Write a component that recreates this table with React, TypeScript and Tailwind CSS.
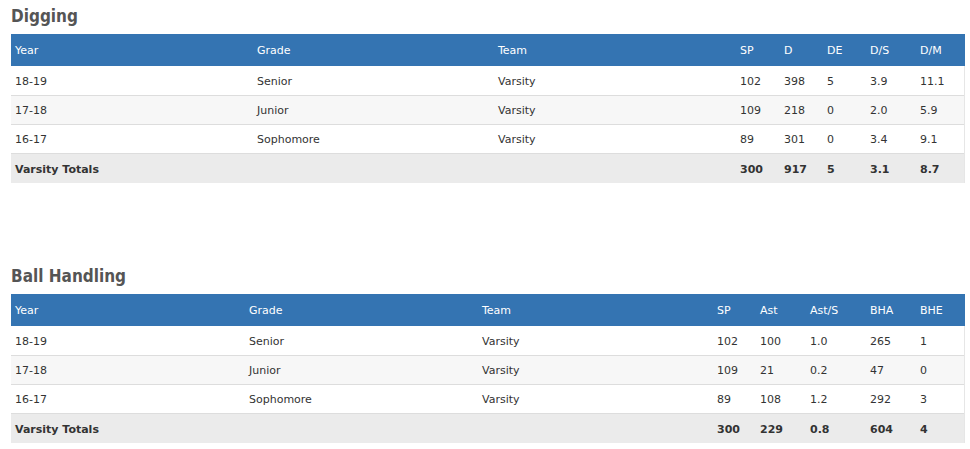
type Row = { year: string; grade: string; team: string; stats: string[] };

type StatTable = {
  title: string;
  cols: string;
  headers: string[];
  rows: Row[];
  totals: string[];
};

const tables: StatTable[] = [
  {
    title: "Digging",
    cols: "grid-cols-[242px_241px_242px_44px_43px_43px_50px_49px]",
    headers: ["Year", "Grade", "Team", "SP", "D", "DE", "D/S", "D/M"],
    rows: [
      { year: "18-19", grade: "Senior", team: "Varsity", stats: ["102", "398", "5", "3.9", "11.1"] },
      { year: "17-18", grade: "Junior", team: "Varsity", stats: ["109", "218", "0", "2.0", "5.9"] },
      { year: "16-17", grade: "Sophomore", team: "Varsity", stats: ["89", "301", "0", "3.4", "9.1"] },
    ],
    totals: ["300", "917", "5", "3.1", "8.7"],
  },
  {
    title: "Ball Handling",
    cols: "grid-cols-[234px_233px_235px_43px_50px_60px_50px_49px]",
    headers: ["Year", "Grade", "Team", "SP", "Ast", "Ast/S", "BHA", "BHE"],
    rows: [
      { year: "18-19", grade: "Senior", team: "Varsity", stats: ["102", "100", "1.0", "265", "1"] },
      { year: "17-18", grade: "Junior", team: "Varsity", stats: ["109", "21", "0.2", "47", "0"] },
      { year: "16-17", grade: "Sophomore", team: "Varsity", stats: ["89", "108", "1.2", "292", "3"] },
    ],
    totals: ["300", "229", "0.8", "604", "4"],
  },
];

function Section({ table, className }: { table: StatTable; className?: string }) {
  return (
    <section className={className}>
      <h2 className="mb-[8px] h-[20px] text-[17px] leading-[20px] font-bold text-[#555] [font-family:'DejaVu_Sans_Condensed','DejaVu_Sans',sans-serif]">
        {table.title}
      </h2>
      <div className="w-[954px] text-[11px] text-[#333]">
        <div className={`grid h-[32px] items-center bg-[#3474b2] pt-[3px] text-white ${table.cols}`}>
          {table.headers.map((h) => (
            <div key={h} className="pl-[4px]">
              {h}
            </div>
          ))}
        </div>
        <div className="border-r border-[#e6e6e6]">
          {table.rows.map((row, i) => (
            <div
              key={row.year}
              className={`grid h-[29px] items-center pt-[3px] ${table.cols} ${
                i > 0 ? "border-t border-[#dddddd]" : ""
              } ${i % 2 === 1 ? "bg-[#f7f7f7]" : "bg-white"}`}
            >
              <div className="pl-[4px]">{row.year}</div>
              <div className="pl-[4px]">{row.grade}</div>
              <div className="pl-[4px]">{row.team}</div>
              {row.stats.map((s, j) => (
                <div key={j} className="pl-[4px]">
                  {s}
                </div>
              ))}
            </div>
          ))}
          <div className={`grid h-[30px] items-center border-t border-[#dddddd] bg-[#ebebeb] pt-[3px] font-bold ${table.cols}`}>
            <div className="col-span-3 pl-[4px]">Varsity Totals</div>
            {table.totals.map((s, j) => (
              <div key={j} className="pl-[4px]">
                {s}
              </div>
            ))}
          </div>
        </div>
      </div>
    </section>
  );
}

export default function App() {
  return (
    <div className="min-h-[449px] w-[970px] bg-white pt-[6px] pl-[11px] [font-family:'DejaVu_Sans',Verdana,sans-serif]">
      <Section table={tables[0]} />
      <Section table={tables[1]} className="mt-[83px]" />
    </div>
  );
}
